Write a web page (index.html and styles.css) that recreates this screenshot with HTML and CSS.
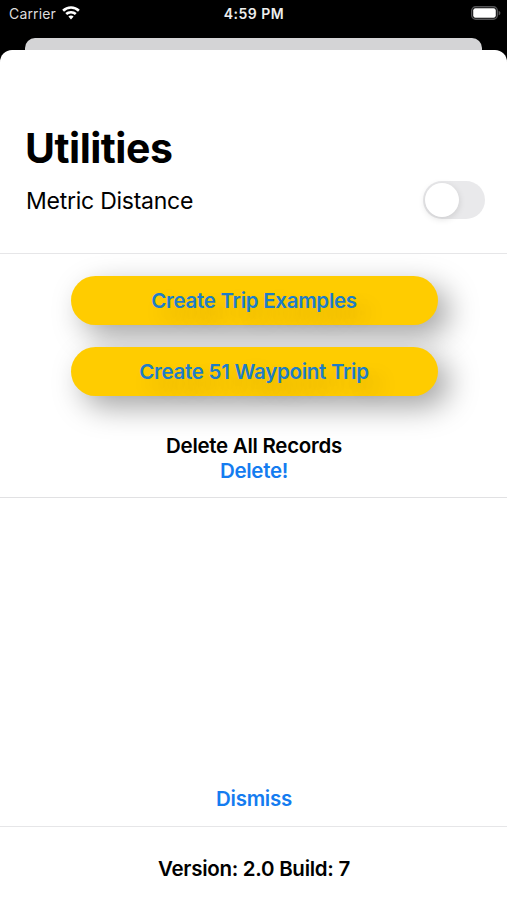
FILE: index.html
```html
<!DOCTYPE html>
<html lang="en">
<head>
<meta charset="utf-8">
<title>Utilities</title>
<link rel="stylesheet" href="styles.css">
</head>
<body>
<header class="status">
  <div class="carrier"><span class="t-carrier">Carrier</span>
    <svg class="wifi" viewBox="0 0 18 14" width="18" height="14"><path fill="#fff" d="M9 .2C5.600.2 2.500 1.500.200 3.700L2 5.700a10 10 0 0 1 14 0l1.800-2A12.700 12.700 0 0 0 9 .2ZM9 4.900c-2.200 0-4.200.8-5.700 2.200l1.800 2a5.600 5.600 0 0 1 7.800 0l1.800-2A8.200 8.200 0 0 0 9 4.900ZM9 9.600c-1 0-1.900.4-2.600 1L9 13.500l2.600-2.900c-.7-.6-1.600-1-2.600-1Z"/></svg>
  </div>
  <span class="t-clock">4:59 PM</span>
  <svg class="battery" viewBox="0 0 30 14" width="30" height="14"><rect x=".7" y=".7" width="25.600" height="12.600" rx="4" fill="none" stroke="#555557" stroke-width="1.400"/><rect x="2.200" y="2.200" width="22.600" height="9.600" rx="2.200" fill="#fff"/><path d="M27.600 4.700c2.400.8 2.400 3.800 0 4.600Z" fill="#555557"/></svg>
</header>
<div class="back-card"></div>
<main class="sheet">
  <section class="top">
    <h1><span class="t-title">Utilities</span></h1>
    <div class="setting"><span class="t-metric">Metric Distance</span><span class="toggle"></span></div>
  </section>
  <section class="actions">
    <button class="pill"><span class="t-examples">Create Trip Examples</span></button>
    <button class="pill"><span class="t-waypoint">Create 51 Waypoint Trip</span></button>
    <div class="line delete-title"><span class="t-all">Delete All Records</span></div>
    <div class="line link"><span class="t-delete">Delete!</span></div>
  </section>
  <section class="space"><div class="line link"><span class="t-dismiss">Dismiss</span></div></section>
  <footer class="line"><span class="t-version">Version: 2.0 Build: 7</span></footer>
</main>
</body>
</html>
```
FILE: styles.css
```css
* { box-sizing: border-box; }
body { margin: 0; height: 900px; overflow: hidden; background: #000; color: #000; font-family: Inter, sans-serif; display: flex; flex-direction: column; }
span { white-space: nowrap; }
.status { height: 38px; padding: 5px 6px 0 9px; color: #fff; display: grid; grid-template-columns: 1fr auto 1fr; align-items: start; font-size: 14px; line-height: 18px; }
.carrier { display: flex; gap: 6px; color: #ddd; letter-spacing: .15px; }
.wifi { margin-top: 1px; }
.battery { justify-self: end; margin-top: 1px; }
.t-clock { font-weight: 600; letter-spacing: .5px; color: #eee; margin-right: 2px; }
.back-card { height: 12px; margin: 0 25px; background: #d4d4d6; border-radius: 10px 10px 0 0; }
.sheet { flex: 1; background: #fff; border-radius: 12px 12px 0 0; display: flex; flex-direction: column; }
.top { height: 204px; padding: 74px 22px 0 26px; border-bottom: 1px solid #e6e6e8; }
h1 { margin: 0 0 0 -1px; font-size: 41px; line-height: 48px; font-weight: 700; letter-spacing: -.5px; }
.setting { display: flex; justify-content: space-between; align-items: center; margin-top: 9px; height: 38px; font-size: 23px; letter-spacing: -.25px; }
.t-metric { padding-top: 2px; }
.toggle { width: 62px; height: 38px; border-radius: 19px; background: #e9e9eb; padding: 2px; }
.toggle::before { content: ""; display: block; width: 34px; height: 34px; border-radius: 50%; background: #fff; box-shadow: 0 2px 7px rgba(0,0,0,.13); }
.actions { height: 244px; padding-top: 22px; border-bottom: 1px solid #e1e1e3; display: flex; flex-direction: column; align-items: center; }
.pill { width: 367px; height: 49px; flex: none; margin: 0 0 22px 1px; border: 0; border-radius: 25px; background: #fc0; color: #1d7dc8; font: 600 20.5px/50px Inter, sans-serif; letter-spacing: -.27px; padding: 0; box-shadow: 11px 11px 30px rgba(0,0,0,.36); text-shadow: 11px 11px 22px rgba(0,0,0,.2); }
.line { font-size: 20.5px; font-weight: 600; line-height: 25px; letter-spacing: -.28px; text-align: center; padding-left: 1px; }
.delete-title { margin-top: 15px; }
.link { color: #147cf0; }
.space { height: 329px; border-bottom: 1px solid #e6e6e8; display: flex; align-items: flex-end; justify-content: center; padding-bottom: 15px; }
footer { padding-top: 29px; }
```
